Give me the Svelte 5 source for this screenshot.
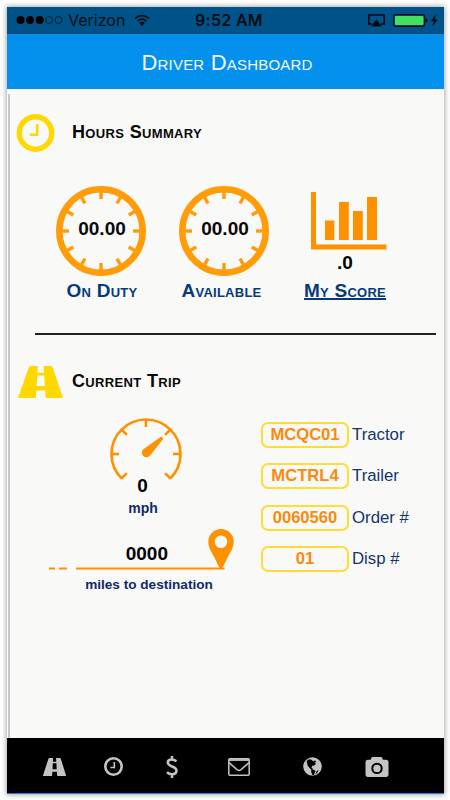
<script lang="ts">
	const gauges = [
		{ label: 'On Duty', value: '00.00' },
		{ label: 'Available', value: '00.00' }
	];

	const details = [
		{ label: 'Tractor', value: 'MCQC01' },
		{ label: 'Trailer', value: 'MCTRL4' },
		{ label: 'Order #', value: '0060560' },
		{ label: 'Disp #', value: '01' }
	];

	const hours = Array.from({ length: 12 }, (_, i) => i * 30);
	const speeds = [-135, -90, -45, 0, 45, 90, 135];
</script>

{#snippet road()}
	<path
		d="M12.500 0h7l-.3 6.800h6.400L25.300 0H32.500q1.500 0 2 1.500L44.500 31q.3 1-.8 1H27.500l-.5-7.500h-9l-.5 7.500H.8q-1.100 0-.8-1L10.500 1.500Q11 0 12.500 0zM19 9.500l-.5 10.500h8l-.5-10.500z"
		fill-rule="evenodd"
	/>
{/snippet}

<div class="phone">
	<div class="status">
		<svg class="signal" width="47" height="10" viewBox="0 0 47 10">
			<circle cx="4.500" cy="5" r="4" />
			<circle cx="14" cy="5" r="4" />
			<circle cx="23.700" cy="5" r="4" />
			<circle cx="33" cy="5" r="3.500" class="ring" />
			<circle cx="42.500" cy="5" r="3.500" class="ring" />
		</svg>
		<span class="carrier">Verizon</span>
		<svg class="wifi" width="16" height="12" viewBox="0 0 16 12">
			<path d="M1 4.500Q8-1.500 15 4.500M3.600 7.200Q8 3.200 12.400 7.200" />
			<path d="M5.200 9Q8 6.600 10.800 9L8 12z" class="solid" />
		</svg>
		<span class="time">9:52 AM</span>
		<svg class="airplay" width="17" height="13" viewBox="0 0 17 13">
			<path d="M4 10H.8V1h15.400v9H13" />
			<path d="M8.500 5.200L14 12.500H3z" class="solid" />
		</svg>
		<svg class="battery" width="46" height="13" viewBox="0 0 46 13">
			<rect x=".6" y=".7" width="31" height="11.600" rx="2" />
			<rect x="2" y="2" width="28.400" height="9" rx="1" class="level" />
			<path d="M32.500 4.300q2 .4 2 2.200t-2 2.200z" class="solid" />
			<path d="M43 .3l-5.200 6.900h3.100l-1.700 5.500 5.700-7.300h-3.200z" class="solid" />
		</svg>
	</div>

	<header><h1>Driver Dashboard</h1></header>

	<main>
		<section class="hours">
			<div class="heading">
				<svg width="46" height="38" viewBox="0 0 46 38">
					<circle cx="20.500" cy="19" r="16.200" fill="none" stroke="#ffd800" stroke-width="5.400" />
					<path d="M22.200 10v10.800h-7.500" fill="none" stroke="#ffd800" stroke-width="2.600" />
				</svg>
				<h2 class="hours-title">Hours Summary</h2>
			</div>

			<div class="gauges">
				{#each gauges as gauge}
					<div class="gauge">
						<div class="dial">
							<svg width="90" height="90" viewBox="-45 -45 90 90">
								<circle r="41.700" fill="none" stroke="#ff9c07" stroke-width="6.600" />
								{#each hours as angle}
									<rect x="-1.700" y="-39" width="3.400" height="7" fill="#ff9c07" transform="rotate({angle})" />
								{/each}
							</svg>
							<span>{gauge.value}</span>
						</div>
						<div class="label">{gauge.label}</div>
					</div>
				{/each}
				<div class="gauge score">
					<svg width="76" height="58" viewBox="0 0 76 58" fill="#ff9000">
						<path d="M0 0h5v52.500h70.500v5H0z" />
						<rect x="14" y="28.500" width="9.300" height="19.500" />
						<rect x="28" y="10" width="9.800" height="38" />
						<rect x="42" y="19" width="9.800" height="29" />
						<rect x="56" y="5" width="10" height="43" />
					</svg>
					<div class="points">.0</div>
					<a class="label" href="#score">My Score</a>
				</div>
			</div>
		</section>

		<section class="trip">
			<div class="heading">
				<svg width="45" height="32" viewBox="0 0 44.500 32" fill="#ffd800">{@render road()}</svg>
				<h2 class="trip-title">Current Trip</h2>
			</div>

			<div class="trip-body">
				<div class="progress">
					<svg class="speedo" width="74" height="64" viewBox="-37 -37 74 64">
						<path d="M-24.400 24.400A34.500 34.500 0 1 1 24.400 24.400" fill="none" stroke="#ff9000" stroke-width="2.700" />
						{#each speeds as angle}
							<rect x="-1.300" y="-35" width="2.600" height="8" fill="#ff9000" transform="rotate({angle})" />
						{/each}
						<path d="M17.500-15.600L4.300 1.300A4.600 4.600 0 1 1-2.600-4.700L15.300-17.500z" fill="#ff9000" />
					</svg>
					<div class="speed">0</div>
					<div class="unit">mph</div>
					<div class="distance">
						<span>0000</span>
						<svg width="26" height="40" viewBox="0 0 26 40">
							<path
								d="M13 0a12.700 12.700 0 0 1 12.700 12.700c0 5.500-3.500 11-6 15.500L14 40h-2L6.300 28.200c-2.500-4.500-6-10-6-15.500A12.700 12.700 0 0 1 13 0zm0 6.500a6.300 6.300 0 1 0 0 12.600 6.300 6.300 0 0 0 0-12.600z"
								fill="#ff9000"
							/>
						</svg>
					</div>
					<svg class="route" width="176" height="3" viewBox="0 0 176 3">
						<path d="M0 1.500h6M10 1.500h8M27 1.500h148.500" stroke="#ff9000" stroke-width="2.200" />
					</svg>
					<div class="unit miles">miles to destination</div>
				</div>

				<div class="details">
					{#each details as detail}
						<div class="detail">
							<span class="value">{detail.value}</span>
							<span class="name">{detail.label}</span>
						</div>
					{/each}
				</div>
			</div>
		</section>
	</main>

	<nav>
		<svg width="23" height="18" viewBox="0 0 44.500 32" preserveAspectRatio="none">{@render road()}</svg>
		<svg width="19" height="19" viewBox="0 0 19 19">
			<circle cx="9.500" cy="9.500" r="8.200" class="line" stroke-width="2.600" />
			<path d="M10.300 5v5.500H6.400" class="line" stroke-width="1.600" />
		</svg>
		<svg width="12" height="22" viewBox="0 0 12 22">
			<path
				d="M10.500 5.300C8.800 3.900 7.500 3.400 5.800 3.400c-2.400 0-4 1.200-4 3.200 0 4.700 8.700 3 8.700 8 0 2.200-1.700 3.700-4.600 3.700-2 0-3.700-.8-4.900-2.100M6 0v4M6 18v4"
				class="line"
				stroke-width="2.500"
			/>
		</svg>
		<svg width="22" height="18" viewBox="0 0 22 18">
			<rect x=".8" y=".8" width="20.400" height="16.400" rx="1" class="line" stroke-width="1.500" />
			<path d="M1 2h20" class="line" stroke-width="1.800" />
			<path d="M1 4.500c3 3 5.500 4.500 7.800 7q2.200 2 4.400 0C15.500 9 18 7.500 21 4.500" class="line" stroke-width="1.500" />
		</svg>
		<svg width="19" height="19" viewBox="0 0 19 19">
			<circle cx="9.500" cy="9.500" r="9.300" />
			<path
				d="M3.600 3.900L6 2.300l2.600.4L10 4.300l2-.8 1.300.9-1.800 1.500 1.700.8-2.100 1.700-1.700.3-1 1.900 1.200.8.300 1.600-1.800-.6-1.900-2-1.700-2.100-.4-2.400zM8.200 12.500l2.600.3 1.900 1.400-1.200 1.500-.3 2.200-1.600.3-1.300-2.700zM14 13.700l1.600-.4-1.500 2.800-2 1z"
				fill="#000"
			/>
		</svg>
		<svg width="24" height="20" viewBox="0 0 24 20">
			<path d="M7.500 0h8.500q1 0 1.300 1l.6 1.800H21q2.500 0 2.500 2.500v12Q23.500 20 21 20H3Q.5 20 .5 17.300v-12Q.5 2.800 3 2.800h2.700L6.300 1Q6.600 0 7.500 0z" />
			<circle cx="12" cy="11.400" r="4.700" fill="none" stroke="#000" stroke-width="2" />
		</svg>
	</nav>
</div>

<style>
	:global(body) {
		background: #fff;
	}

	.phone {
		width: 437px;
		height: 787px;
		margin: 7px 6px 6px 7px;
		display: flex;
		flex-direction: column;
		background: #f9f9f8;
		font-family: 'Liberation Sans', Arial, sans-serif;
		box-shadow: 0 0 5px 1px #aaa;
	}

	svg {
		display: block;
		flex: none;
	}

	.status {
		height: 27px;
		flex: none;
		display: flex;
		align-items: center;
		box-sizing: border-box;
		padding-left: 9px;
		background: #005389;
		border-bottom: 1px solid #00457b;
		color: #050b12;
		font: 17px/26px Inter, 'Liberation Sans', sans-serif;
	}

	.status .ring {
		fill: none;
		stroke: #06192a;
		stroke-width: 0.9;
	}

	.carrier {
		width: 58px;
		margin-left: 5px;
		font-size: 16px;
	}

	.wifi {
		margin-left: 8px;
	}

	.wifi path,
	.airplay path {
		fill: none;
		stroke: #050b12;
		stroke-width: 1.6;
	}

	.status .solid {
		fill: #050b12;
		stroke: none;
	}

	.time {
		width: 72px;
		margin-left: 45px;
		font-size: 16px;
		font-weight: 600;
		letter-spacing: 0.3px;
		white-space: nowrap;
	}

	.airplay {
		margin-left: 101px;
	}

	.battery {
		margin-left: 8px;
	}

	.battery rect {
		fill: none;
		stroke: #050b12;
		stroke-width: 1.2;
	}

	.battery .level {
		fill: #46df5c;
		stroke: none;
	}

	header {
		height: 55px;
		flex: none;
		background: #0491ed;
	}

	h1 {
		margin: 0;
		padding-left: 3px;
		color: #f2f8fc;
		font-size: 22px;
		font-weight: 400;
		font-variant: small-caps;
		letter-spacing: 0.2px;
		line-height: 58px;
		text-align: center;
	}

	main {
		flex: 1;
		margin: 5px 0 0 1px;
		border-left: 2px solid #c9c9c9;
	}

	.hours {
		height: 241px;
		box-sizing: border-box;
		margin: 0 8px 0 25px;
		padding-top: 20px;
		border-bottom: 2px solid #222;
	}

	.heading {
		display: flex;
		align-items: center;
	}

	.hours .heading {
		height: 38px;
		margin-left: -20px;
	}

	h2 {
		margin: 0;
		font-size: 18px;
		font-variant: small-caps;
		letter-spacing: 0.35px;
		line-height: 36px;
		color: #080808;
	}

	.hours-title {
		margin-left: 11px;
		padding-bottom: 2px;
	}

	.gauges {
		display: flex;
		padding: 34px 0 0 21px;
		gap: 33px;
	}

	.gauge {
		width: 90px;
		text-align: center;
	}

	.dial {
		display: grid;
		place-items: center;
	}

	.dial svg,
	.dial span {
		grid-area: 1 / 1;
	}

	.dial span {
		padding: 0 0 4px 2px;
		font-size: 19px;
		font-weight: 700;
		color: #080808;
	}

	.label {
		display: block;
		padding-left: 2px;
		color: #063b78;
		font-size: 19px;
		font-weight: 700;
		font-variant: small-caps;
		letter-spacing: 0.25px;
		line-height: 30px;
		white-space: nowrap;
	}

	.gauge:nth-child(2) .label {
		margin-left: -7px;
	}

	.score {
		display: flex;
		flex-direction: column;
		align-items: center;
		padding-top: 6px;
		margin-left: -2px;
	}

	.score .label {
		padding-left: 0;
		text-decoration-thickness: 2px;
	}

	.score svg {
		margin-left: 7px;
	}

	.points {
		font-size: 19px;
		font-weight: 700;
		line-height: 26px;
	}

	.trip {
		padding: 31px 0 0 8px;
	}

	h2.trip-title {
		margin-left: 9px;
		line-height: 28px;
		padding-bottom: 2px;
	}

	.trip-body {
		display: flex;
		padding-top: 19px;
	}

	.progress {
		width: 243px;
		display: flex;
		flex-direction: column;
		align-items: center;
	}

	.speedo {
		margin-left: 12px;
	}

	.speed {
		height: 14px;
		margin-left: 6px;
		font-size: 19px;
		font-weight: 700;
		line-height: 9px;
	}

	.unit {
		margin-left: 7px;
		color: #102a66;
		font-size: 14px;
		font-weight: 700;
		line-height: 26px;
	}

	.distance {
		height: 40px;
		align-self: stretch;
		display: flex;
		justify-content: flex-end;
		gap: 40px;
		padding: 8px 27px 0 0;
	}

	.distance span {
		font-size: 19px;
		font-weight: 700;
		line-height: 49px;
	}

	.route {
		align-self: flex-start;
		margin: -2px 0 0 31px;
	}

	.miles {
		margin-left: 19px;
		font-size: 13.6px;
		line-height: 30px;
	}

	.details {
		display: grid;
		align-content: start;
		gap: 15.3px;
		padding-top: 5px;
	}

	.detail {
		display: flex;
		align-items: center;
		gap: 3px;
	}

	.value {
		width: 88px;
		height: 26px;
		box-sizing: border-box;
		border: 2px solid #ffdc38;
		border-radius: 7px;
		color: #fa8b0c;
		font-size: 16.6px;
		font-weight: 700;
		line-height: 22px;
		text-align: center;
	}

	.name {
		color: #12366b;
		font-size: 16.8px;
		line-height: 26px;
	}

	nav {
		height: 56px;
		flex: none;
		box-sizing: border-box;
		display: grid;
		grid-template-columns: 60px 59px 58px 76px 71px 57px;
		align-items: center;
		justify-items: center;
		padding: 2px 0 0 17px;
		background: #000;
		border-bottom: 1px solid #1580d8;
		fill: #c4c4c4;
	}

	.line {
		fill: none;
		stroke: #c4c4c4;
	}
</style>
